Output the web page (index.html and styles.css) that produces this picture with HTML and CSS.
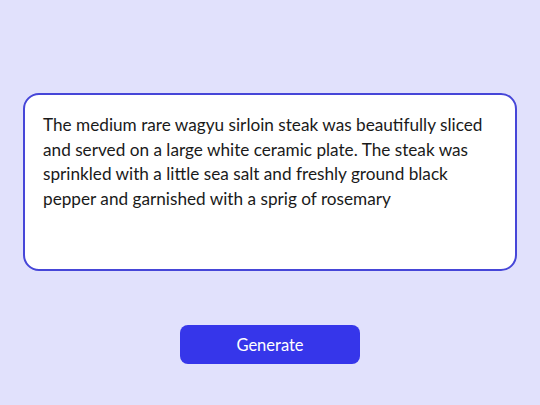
FILE: index.html
```html
<!DOCTYPE html>
<html>
<head>
<meta charset="utf-8">
<link rel="stylesheet" href="styles.css">
</head>
<body>
<main class="page">
  <div class="prompt-box">
    <p class="prompt-text">The medium rare wagyu sirloin steak was beautifully sliced and served on a large white ceramic plate. The steak was sprinkled with a little sea salt and freshly ground black pepper and garnished with a sprig of rosemary</p>
  </div>
  <button class="generate-btn">Generate</button>
</main>
</body>
</html>
```
FILE: styles.css
```css
html, body {
  margin: 0;
  padding: 0;
}
body {
  background: #e1e1fc;
  width: 540px;
  height: 405px;
  overflow: hidden;
  font-family: "Lato", "Noto Sans", sans-serif;
}
.page {
  display: flex;
  flex-direction: column;
  align-items: center;
  padding-top: 93px;
}
.prompt-box {
  box-sizing: border-box;
  width: 494px;
  height: 178px;
  background: #ffffff;
  border: 2px solid #4646d8;
  border-radius: 16px;
  padding: 18px 18px;
}
.prompt-text {
  margin: 0;
  font-size: 17.2px;
  line-height: 24.5px;
  color: #1a1a1a;
}
.generate-btn {
  margin-top: 54px;
  width: 180px;
  height: 39px;
  border: none;
  border-radius: 8px;
  background: #3636ea;
  color: #ffffff;
  font-family: inherit;
  font-size: 16.5px;
}
```
